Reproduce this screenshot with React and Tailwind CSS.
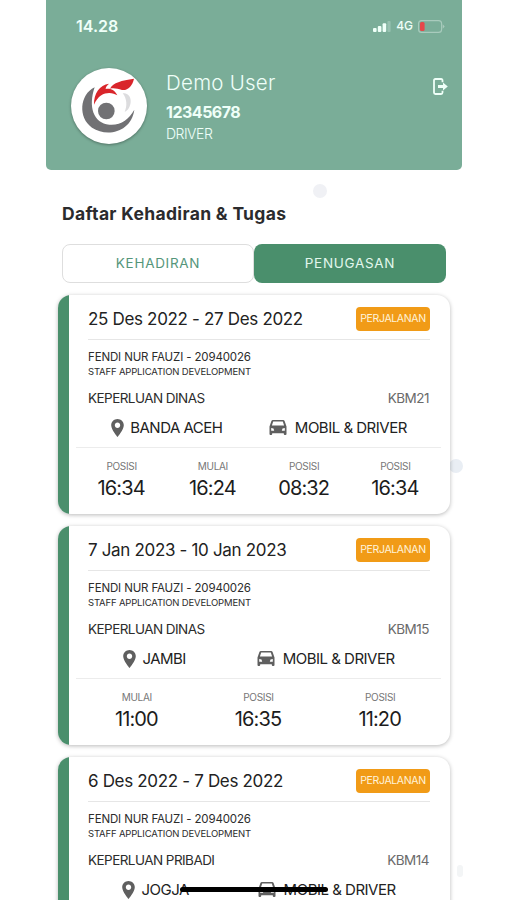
import React from 'react';

const tasks = [
  {
    date: '25 Des 2022 - 27 Des 2022',
    need: 'KEPERLUAN DINAS',
    code: 'KBM21',
    city: 'BANDA ACEH',
    times: [
      { label: 'POSISI', time: '16:34' },
      { label: 'MULAI', time: '16:24' },
      { label: 'POSISI', time: '08:32' },
      { label: 'POSISI', time: '16:34' },
    ],
  },
  {
    date: '7 Jan 2023 - 10 Jan 2023',
    need: 'KEPERLUAN DINAS',
    code: 'KBM15',
    city: 'JAMBI',
    times: [
      { label: 'MULAI', time: '11:00' },
      { label: 'POSISI', time: '16:35' },
      { label: 'POSISI', time: '11:20' },
    ],
  },
  {
    date: '6 Des 2022 - 7 Des 2022',
    need: 'KEPERLUAN PRIBADI',
    code: 'KBM14',
    city: 'JOGJA',
    times: [],
  },
];

const Logo = () => (
  <svg className="h-[76px] w-[76px]" viewBox="33 24 228 228">
    <path fill="#717174" d="M104 82C58 104 54 174 96 203C142 233 214 216 223 149C206 178 182 197 148 194C100 190 84 140 104 82Z" />
    <circle cx="139" cy="153" r="25" fill="#717174" />
    <path fill="#dcdcde" d="M188 100C205 97 216 113 211 133C208 146 202 152 194 156C202 138 201 116 188 100Z" />
    <path fill="#d9252b" d="M102 134C101 100 119 75 147 71C140 77 137 81 137 87C151 83 166 91 172 106C155 95 120 92 102 134Z" />
    <path fill="#d9252b" d="M150 86C160 67 184 62 222 56C217 78 204 92 186 90C173 87 163 83 150 86Z" />
  </svg>
);

const PinIcon = () => (
  <svg className="h-[18px] w-[13px] shrink-0" viewBox="5 2 14 20" fill="#5f5f5f">
    <path d="M12 2C8.13 2 5 5.13 5 9c0 5.25 7 13 7 13s7-7.75 7-13c0-3.87-3.13-7-7-7zm0 10c-1.7 0-3-1.3-3-3s1.3-3 3-3 3 1.3 3 3-1.3 3-3 3z" />
  </svg>
);

const CarIcon = () => (
  <svg className="mb-0.5 h-[15px] w-[18px] shrink-0" viewBox="0 0 18 15" fill="#5f5f5f">
    <path
      fillRule="evenodd"
      d="M4 0H14Q15.3 0 15.7 1.2L17.5 6.5V14Q17.5 15 16.5 15H15.8Q14.8 15 14.8 14V13.2H3.2V14Q3.2 15 2.2 15H1.5Q0.5 15 0.5 14V6.5L2.3 1.2Q2.7 0 4 0ZM4.2 1.5L2.9 5.6H15.1L13.8 1.5ZM2.2 8V10.8H5.2L4.5 8.6ZM15.8 8V10.8H12.8L13.5 8.6Z"
    />
  </svg>
);

const TaskCard = ({ task }) => (
  <div className="flex h-[219px] shrink-0 overflow-hidden rounded-[13px] bg-white shadow-[0_1px_4px_rgba(0,0,0,0.28)]">
    <div className="w-[11px] shrink-0 bg-[#4a8f6c]" />
    <div className="flex-1 pt-3">
      <div className="ml-[19px] mr-5">
        <div className="flex h-8 items-start justify-between">
          <span className="text-[17px] leading-6 tracking-[-0.33px] text-[#222]">{task.date}</span>
          <span className="flex h-6 w-[74px] items-center justify-center rounded bg-[#f19b17] text-[10.5px] tracking-[-0.35px] text-[#fff3da]">
            PERJALANAN
          </span>
        </div>
        <div className="h-px bg-[#e6e6e6]" />
        <p className="mt-[9px] text-[11.5px] leading-4 tracking-[-0.14px] text-[#2c2c2c]">FENDI NUR FAUZI - 20940026</p>
        <p className="text-[9.5px] leading-[14px] tracking-[-0.16px] text-[#2c2c2c]">STAFF APPLICATION DEVELOPMENT</p>
        <div className="mt-2 flex justify-between text-[13.5px] leading-[22px]">
          <span className="tracking-[-0.55px] text-[#2c2c2c]">{task.need}</span>
          <span className="mr-px tracking-[-0.5px] text-[#6a6a6a]">{task.code}</span>
        </div>
        <div className="mt-[7px] flex h-6 items-center justify-around text-[15px] tracking-[-0.5px] text-[#222]">
          <div className="flex items-center gap-1.5">
            <PinIcon />
            <span>{task.city}</span>
          </div>
          <div className="flex items-center gap-2">
            <CarIcon />
            <span>MOBIL &amp; DRIVER</span>
          </div>
        </div>
      </div>
      {task.times.length > 0 && (
        <div className="ml-[7px] mr-[9px] mt-[7px] flex border-t border-[#ececec] pt-[10px]">
          {task.times.map((item, i) => (
            <div key={i} className="flex-1 text-center">
              <p className="text-[10px] leading-4 tracking-[-0.3px] text-[#777]">{item.label}</p>
              <p className="mr-px mt-px text-[20px] leading-[26px] tracking-[-0.9px] text-[#1c1c1c]">{item.time}</p>
            </div>
          ))}
        </div>
      )}
    </div>
  </div>
);

const App = () => {
  return (
    <div className="relative h-[900px] w-[507px] overflow-hidden bg-white font-['Inter',sans-serif]">
      {/* Background dots */}
      <div className="absolute left-[313px] top-[184px] h-3.5 w-3.5 rounded-full bg-[#f0f1f5]" />
      <div className="absolute left-[449px] top-[459px] h-3.5 w-3.5 rounded-full bg-[#e9eef4]" />
      <div className="absolute left-[457px] top-[865px] h-3 w-1.5 rounded-full bg-[#f3f5f6]" />

      <div className="relative ml-[46px] w-[416px]">
        {/* Header */}
        <div className="h-[169.5px] rounded-b-[5px] bg-[#7aad98] text-[#effff8]">
          <div className="flex h-[52px] items-center pl-[30px] pr-[17px]">
            <span className="text-[16px] font-semibold">14.28</span>
            <svg className="ml-auto h-[11px] w-[18px]" viewBox="0 0 18 11" fill="#effff8">
              <rect x="0" y="7" width="3.6" height="4" rx="1" />
              <rect x="4.8" y="5" width="3.6" height="6" rx="1" />
              <rect x="9.6" y="2.2" width="3.6" height="8.8" rx="1" />
              <rect x="14.4" y="0" width="3.2" height="11" rx="1" opacity="0.25" />
            </svg>
            <span className="ml-[5px] text-[12px] font-medium">4G</span>
            <svg className="ml-[5px] h-[13px] w-[27px]" viewBox="0 0 27 13">
              <rect x="0.6" y="0.6" width="23" height="11.8" rx="3" fill="none" stroke="#a9cbbd" strokeWidth="1.1" />
              <rect x="2" y="2" width="4.6" height="9" rx="1.6" fill="#e5484a" />
              <path d="M24.7 4.2L26.7 6.5L24.7 8.8Z" fill="#a9cbbd" />
            </svg>
          </div>
          <div className="flex pl-[25px] pr-[14px] pt-4">
            <div className="h-[76px] w-[76px] rounded-full bg-white shadow-[0_1px_3px_rgba(0,0,0,0.35)]">
              <Logo />
            </div>
            <div className="ml-[19px] pt-[2px]">
              <p className="text-[20.5px] font-light leading-[26px] tracking-[0.25px]">Demo User</p>
              <p className="mt-[5px] text-[16px] font-bold leading-[22px] tracking-[-0.5px]">12345678</p>
              <p className="mt-px text-[14px] font-light leading-[20px] tracking-[-0.5px]">DRIVER</p>
            </div>
            <svg className="ml-auto mt-[10px] h-[17px] w-[16px]" viewBox="0 0 16 17" fill="none">
              <path d="M10.5 4.2V2.4Q10.5 1 9.1 1H3.4Q2 1 2 2.4V14.6Q2 16 3.4 16H9.1Q10.5 16 10.5 14.6V12.8" stroke="#effff8" strokeWidth="1.8" />
              <path d="M6 7H11V4.6L15.8 8.5L11 12.4V10H6Z" fill="#effff8" />
            </svg>
          </div>
        </div>

        {/* Title and tabs */}
        <h1 className="ml-4 mt-[32.5px] text-[17.5px] font-bold leading-6 tracking-[0.33px] text-[#2b2b2d]">
          Daftar Kehadiran &amp; Tugas
        </h1>
        <div className="ml-4 mr-4 mt-[18px] flex h-[39px] text-[13.5px] tracking-[0.7px]">
          <button className="w-1/2 rounded-[8px] border border-[#dedede] bg-white text-[#55967a]">KEHADIRAN</button>
          <button className="w-1/2 rounded-[8px] bg-[#4a8f6c] text-[#e2f7ec]">PENUGASAN</button>
        </div>

        {/* Task list */}
        <div className="ml-3 mr-3 mt-3 flex flex-col gap-3">
          {tasks.map((task) => (
            <TaskCard key={task.date} task={task} />
          ))}
        </div>
      </div>

      {/* Home indicator */}
      <div className="absolute left-[180px] top-[887px] h-[5px] w-[148px] rounded-full bg-black" />
    </div>
  );
};

export default App;
